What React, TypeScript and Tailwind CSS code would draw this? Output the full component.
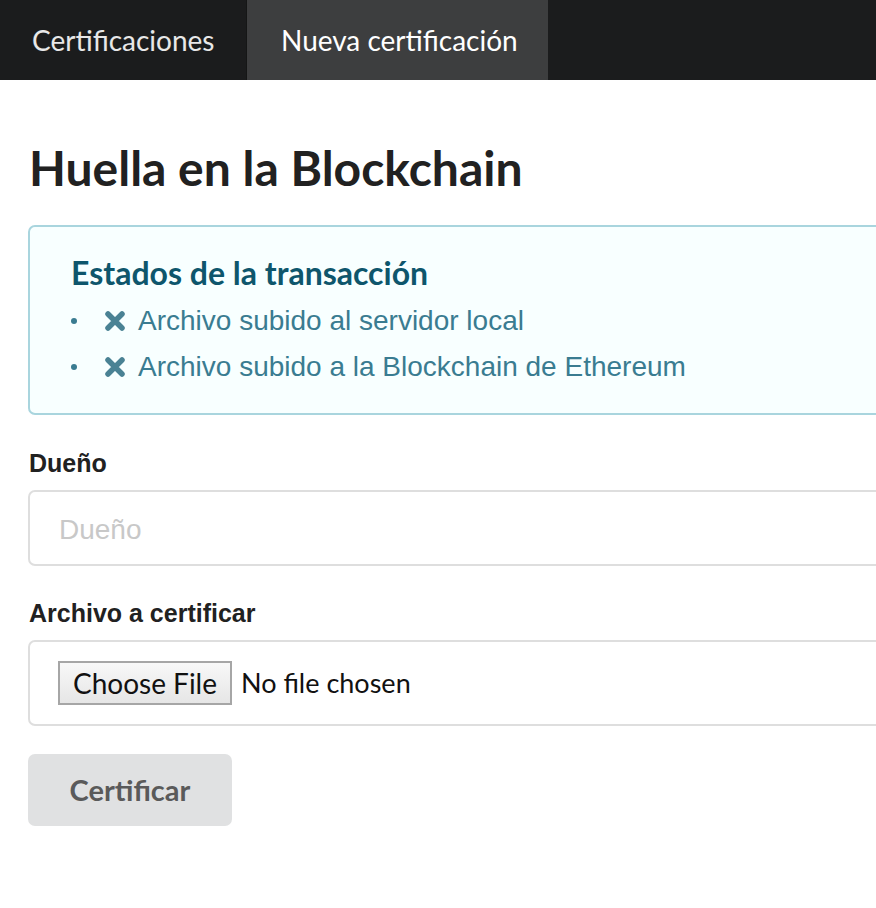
import React from 'react';

const lato = "font-['Lato','Noto_Sans',sans-serif]";
const helv = "font-['Liberation_Sans','Arial',sans-serif]";

const estados = ['Archivo subido al servidor local', 'Archivo subido a la Blockchain de Ethereum'];

const XIcon = () => (
  <svg width="22" height="22" viewBox="0 0 22 22" className="shrink-0">
    <path d="M4 4L18 18M18 4L4 18" stroke="currentColor" strokeWidth="5.5" strokeLinecap="round" />
  </svg>
);

export default function App() {
  return (
    <div className="w-[876px] h-[908px] overflow-hidden bg-white">
      <div className="w-[1100px]">
        {/* barra de navegación */}
        <nav className={`flex h-[80px] bg-[#1b1c1d] ${lato}`}>
          <a className="flex items-center w-[247px] pl-[32px] text-[28px] text-white/90 border-r border-[#151616]">
            Certificaciones
          </a>
          <a className="flex items-center pl-[34px] w-[301px] text-[28px] text-white bg-[#3d3e3f]">
            Nueva certificación
          </a>
        </nav>

        <main className="pl-[28px] pt-[58px]">
          <h1 className={`${lato} font-bold text-[48px] leading-[60px] text-[#212121] pl-[1px]`}>
            Huella en la Blockchain
          </h1>

          {/* mensaje de estado */}
          <div className="mt-[27px] h-[190px] border-2 border-[#a9d5de] rounded-[7px] bg-[#f8ffff] pl-[41px] pt-[27px]">
            <h2 className={`${lato} font-bold text-[32px] leading-[38px] text-[#0e566c]`}>Estados de la transacción</h2>
            <ul className={`${helv} text-[28px] text-[#3a7c91] mt-[6px]`}>
              {estados.map((e) => (
                <li key={e} className="flex items-center h-[46px]">
                  <span className="w-[6px] h-[6px] rounded-full bg-[#3a7c91] mr-[27px]" />
                  <span className="text-[#4a8294] mr-[12px]">
                    <XIcon />
                  </span>
                  {e}
                </li>
              ))}
            </ul>
          </div>

          {/* formulario */}
          <form className="mt-[32px]">
            <label className={`block ${helv} font-bold text-[25px] leading-[32px] text-[#212121] pl-[1px]`}>Dueño</label>
            <input
              placeholder="Dueño"
              className={`mt-[11px] block w-full h-[76px] border-2 border-[#dedede] rounded-[7px] px-[29px] pt-[4px] ${helv} text-[28px] text-[#212121] placeholder:text-[#c8c8c8] outline-none`}
            />

            <label className={`block mt-[31px] ${helv} font-bold text-[25px] leading-[32px] text-[#212121] pl-[1px]`}>
              Archivo a certificar
            </label>
            <div className="mt-[11px] h-[86px] border-2 border-[#dedede] rounded-[7px] pl-[28px] flex items-center">
              <span className={`flex items-center justify-center w-[174px] h-[44px] border-2 border-[#a6a6a6] bg-gradient-to-b from-[#f8f8f8] to-[#e6e6e6] ${lato} text-[28px] text-[#111]`}>
                Choose File
              </span>
              <span className={`ml-[9px] ${lato} text-[27px] text-[#111]`}>No file chosen</span>
            </div>

            <button
              type="button"
              className={`mt-[28px] w-[204px] h-[72px] rounded-[7px] bg-[#e0e1e2] ${lato} font-bold text-[29px] text-[#5a5a5a]`}
            >
              Certificar
            </button>
          </form>
        </main>
      </div>
    </div>
  );
}
